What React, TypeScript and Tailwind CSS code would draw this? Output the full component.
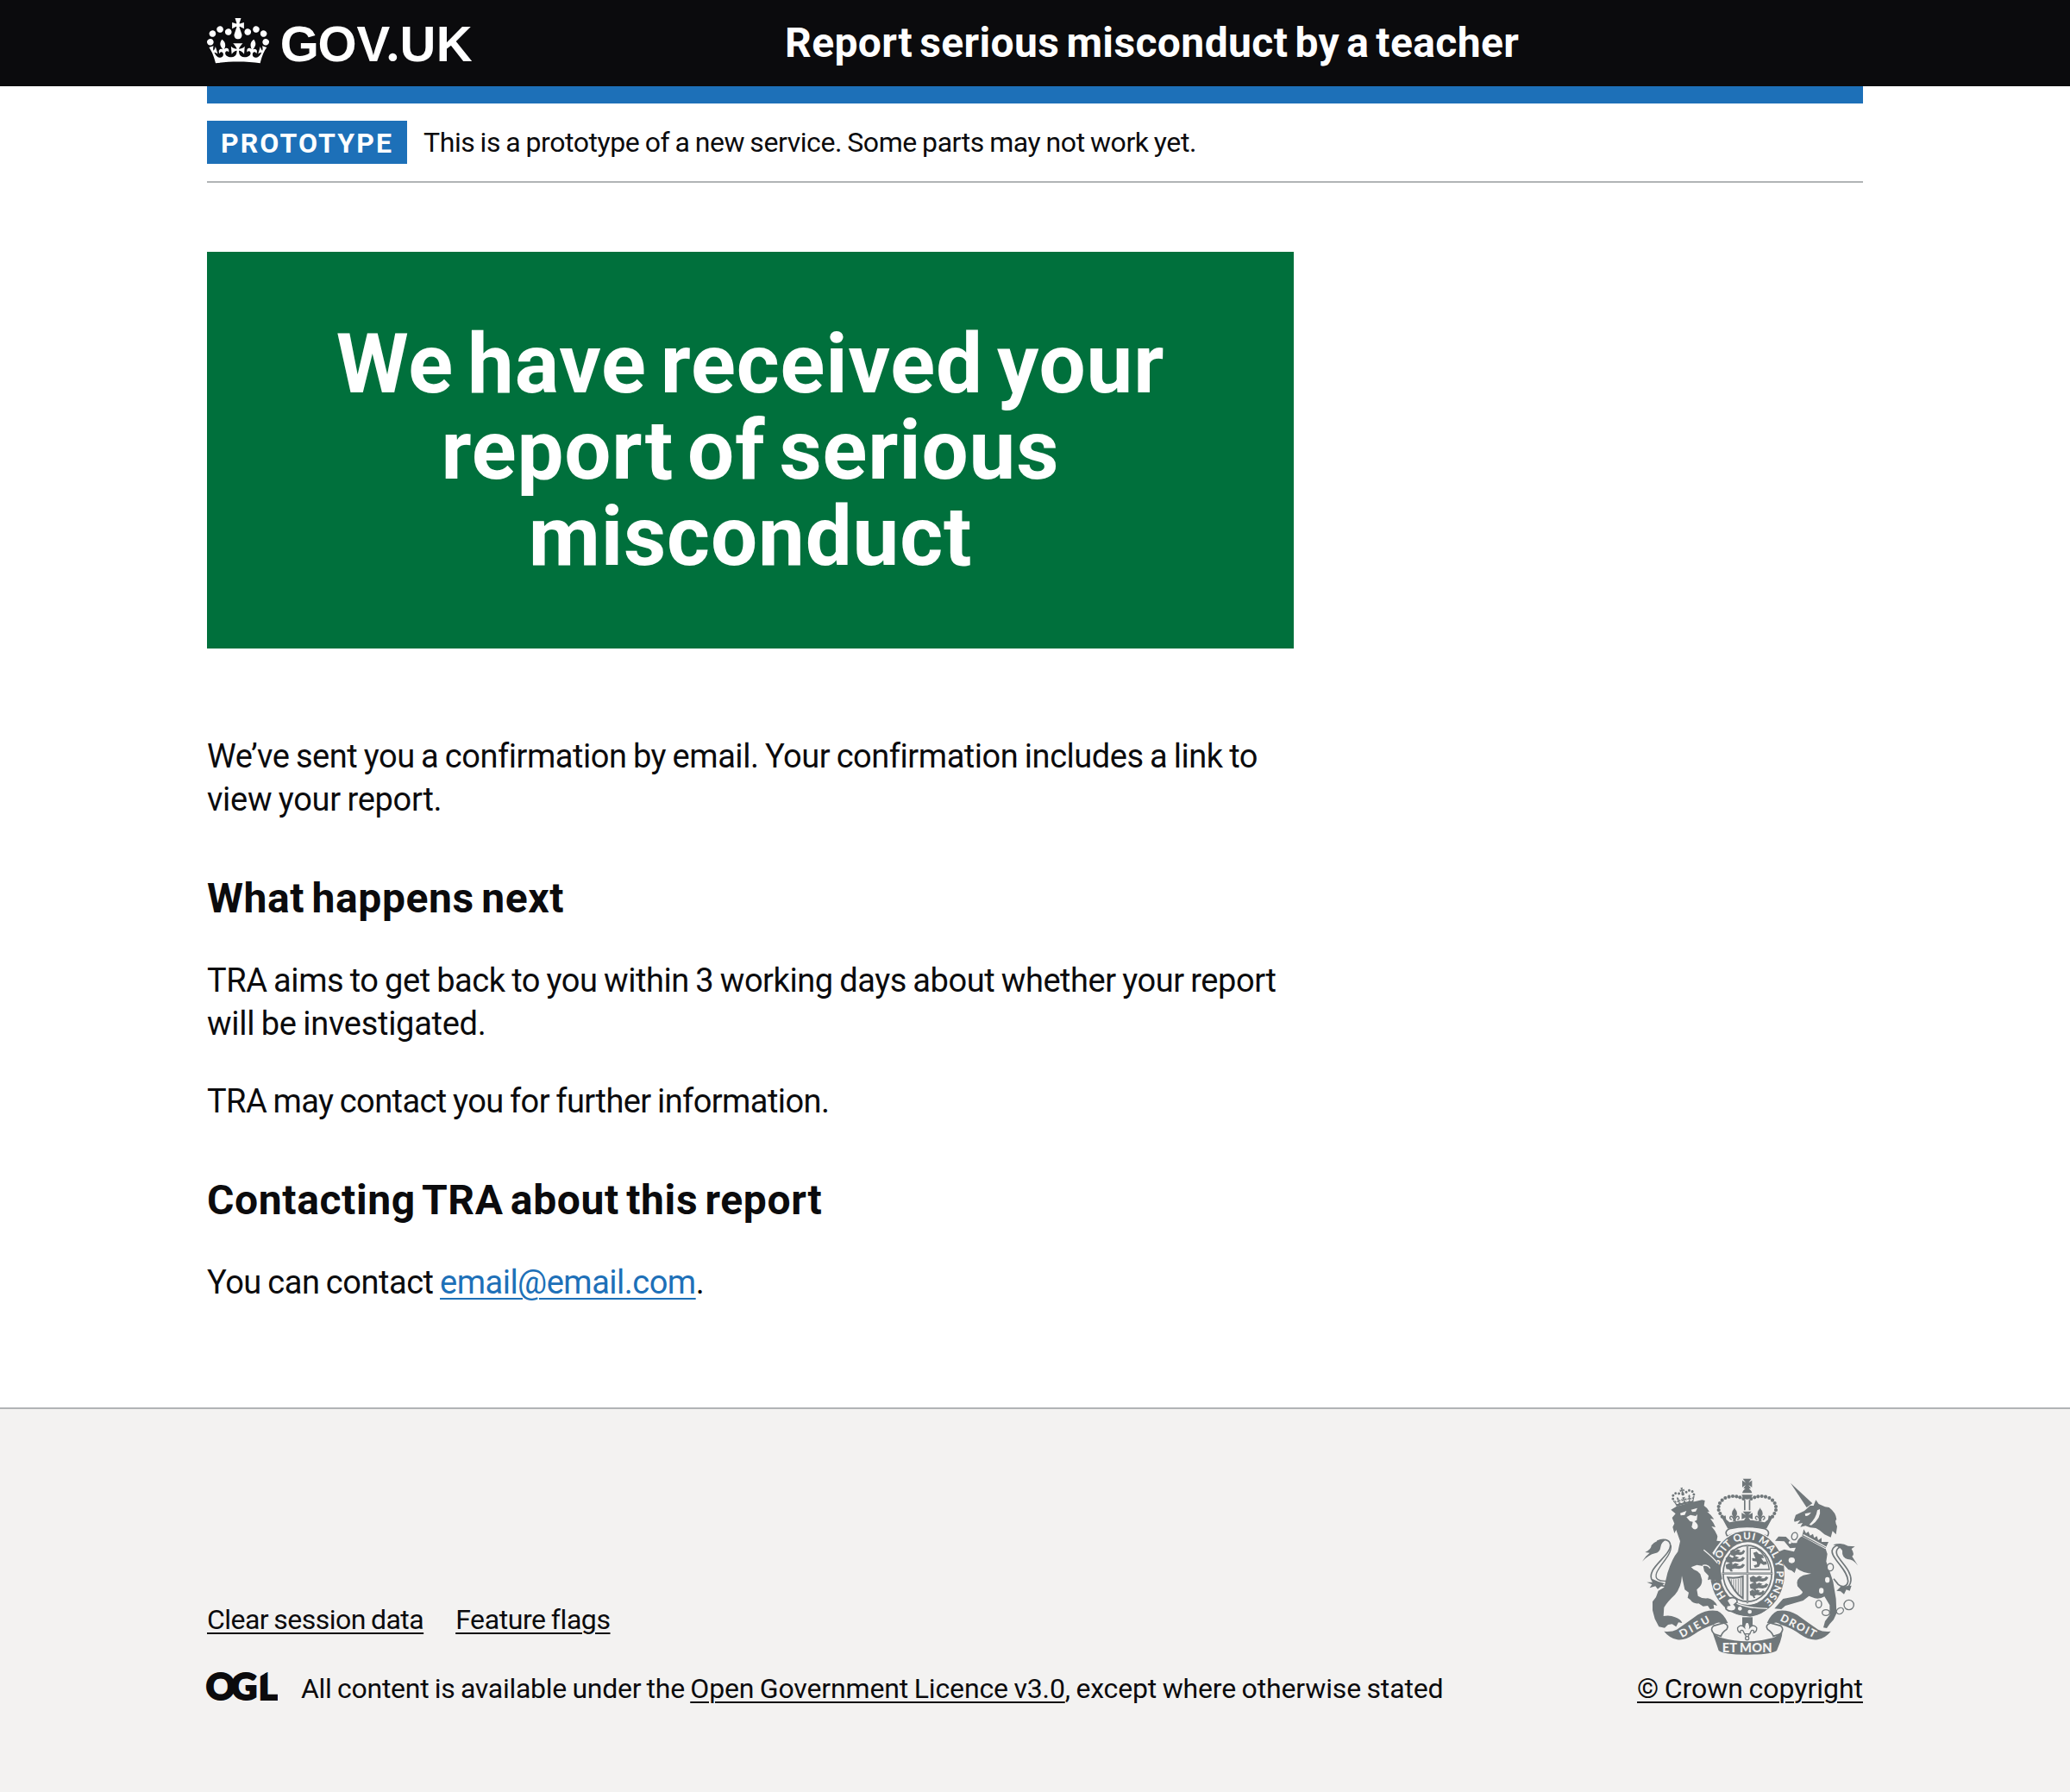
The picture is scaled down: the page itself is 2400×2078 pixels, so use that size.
const CROWN =
  "M25 30.2c3.5 1.5 7.7-.2 9.1-3.7 1.5-3.6-.2-7.8-3.9-9.2-3.6-1.4-7.6.3-9.1 3.9-1.4 3.5.3 7.5 3.9 9zM9 39.5c3.6 1.5 7.8-.2 9.2-3.7 1.5-3.6-.2-7.8-3.9-9.1-3.6-1.5-7.6.2-9.1 3.8-1.4 3.5.3 7.5 3.8 9zM4.4 57.2c3.5 1.5 7.7-.2 9.1-3.8 1.5-3.6-.2-7.7-3.9-9.1-3.5-1.5-7.6.3-9.1 3.8-1.4 3.5.3 7.6 3.9 9.1zm38.3-21.4c3.5 1.5 7.7-.2 9.1-3.8 1.5-3.6-.2-7.7-3.9-9.1-3.6-1.5-7.6.3-9.1 3.8-1.3 3.6.4 7.7 3.9 9.1zm64.4-5.6c-3.6 1.5-7.8-.2-9.1-3.7-1.5-3.6.2-7.8 3.8-9.2 3.6-1.4 7.7.3 9.2 3.9 1.3 3.5-.4 7.5-3.9 9zm15.9 9.3c-3.6 1.5-7.7-.2-9.1-3.7-1.5-3.6.2-7.8 3.7-9.1 3.6-1.5 7.7.2 9.2 3.8 1.5 3.5-.3 7.5-3.8 9zm4.7 17.7c-3.6 1.5-7.8-.2-9.2-3.8-1.5-3.6.2-7.7 3.9-9.1 3.6-1.5 7.7.3 9.2 3.8 1.3 3.5-.4 7.6-3.9 9.1zM89.3 35.8c-3.6 1.5-7.8-.2-9.2-3.8-1.4-3.6.2-7.7 3.9-9.1 3.6-1.5 7.7.3 9.2 3.8 1.4 3.6-.3 7.7-3.9 9.1zM69.7 17.7l8.9 4.7V9.3l-8.9 2.8c-.2-.3-.5-.6-.9-.9L72.4 0H59.6l3.5 11.2c-.3.3-.6.5-.9.9l-8.8-2.8v13.1l8.8-4.7c.3.3.6.7.9.9l-5 15.4v.1c-.2.8-.4 1.6-.4 2.4 0 4.1 3.1 7.5 7 8.1h.2c.3 0 .7.1 1 .1.4 0 .7 0 1-.1h.2c4-.6 7.1-4.1 7.1-8.1 0-.8-.1-1.7-.4-2.4V34l-5.1-15.4c.4-.2.7-.6 1-.9zM66 92.8c16.9 0 32.8 1.1 47.1 3.2 4-16.9 8.9-26.7 14-33.5l-9.6-3.4c1 4.9 1.1 7.2 0 10.2-1.5-1.4-3-4.3-4.2-8.7L108.6 76c2.8-2 5-3.2 7.5-3.3-4.4 9.4-10 11.9-13.6 11.2-4.3-.8-6.3-4.6-5.6-7.9 1-4.7 5.7-5.9 8-.5 4.3-8.7-3-11.4-7.6-8.8 7.1-7.2 7.9-13.5 2.1-21.1-8 6.1-8.1 12.3-4.5 20.8-4.7-5.4-12.1-2.5-9.5 6.2 3.4-5.2 7.9-2 7.2 3.1-.6 4.3-6.4 7.8-13.5 7.2-10.3-.9-10.9-8-11.2-13.8 2.5-.5 7.1 1.8 11 7.3L80.2 60c-4.1 4.4-8 5.3-12.3 5.4 1.4-4.4 8-11.6 8-11.6H55.5s6.4 7.2 7.9 11.6c-4.2-.1-8-1-12.3-5.4l1.4 16.4c3.9-5.5 8.5-7.7 10.9-7.3-.3 5.8-.9 12.8-11.1 13.8-7.2.6-12.9-2.9-13.5-7.2-.7-5 3.8-8.3 7.1-3.1 2.7-8.7-4.6-11.6-9.4-6.2 3.7-8.5 3.6-14.7-4.6-20.8-5.8 7.6-5 13.9 2.2 21.1-4.7-2.6-11.9.1-7.7 8.8 2.3-5.5 7.1-4.2 8.1.5.7 3.3-1.3 7.1-5.7 7.9-3.5.7-9-1.8-13.5-11.2 2.5.1 4.7 1.3 7.5 3.3l-4.7-15.4c-1.2 4.4-2.7 7.2-4.3 8.7-1.1-3-.9-5.3 0-10.2l-9.5 3.4c5 6.9 9.9 16.7 14 33.5 14.8-2.1 30.8-3.2 47.7-3.2z";

const INK = "#70777a";
const PAPER = "#f3f2f1";

function Logotype() {
  return (
    <a href="#" aria-label="GOV.UK" className="block w-[670px] shrink-0">
      <svg viewBox="0 0 320 60" className="block h-[60px] w-[320px] overflow-visible" fill="white">
        <g transform="translate(0 1) scale(0.5455)">
          <path fillRule="evenodd" d={CROWN} />
        </g>
        <text
          x="84.8 128.4 173.6 208.4 223.600 265.800"
          y="51"
          className="font-['Liberation_Sans',sans-serif] text-[58px] font-bold"
        >
          GOV
          <tspan className="font-['Lato',sans-serif] font-black">.</tspan>
          UK
        </text>
      </svg>
    </a>
  );
}

function OglLogo() {
  return (
    <svg viewBox="0 0 82 34" className="mt-px block h-[34px] w-[82px] shrink-0 overflow-visible" fill="#0b0b0d" role="img" aria-label="OGL">
      <defs>
        <clipPath id="ogl-cut">
          <path d="M-2 -3H60V6L71.500 -1V22H82V33.200H62.500L60.500 33.200L57 30V36H-2Z" />
        </clipPath>
      </defs>
      <g clipPath="url(#ogl-cut)">
        <text
          x="-1.200 27.800 59.800"
          y="32.200"
          stroke="#0b0b0d"
          strokeWidth="2.200"
          className="font-['Lato',sans-serif] text-[42px] font-black"
        >
          OGL
        </text>
      </g>
    </svg>
  );
}

/* Beads along one arch of the central crown, mirrored for the other. */
const BEADS = [
  [424, 142], [412, 137], [400, 134], [387, 133], [374, 135], [361, 139], [350, 147], [342, 157], [338, 169], [338, 181], [343, 193], [350, 204],
];

const RAMPANT = "M0 8l10-6 8 5 8-5 10 4-6 4 10 0 6-6 6 4-6 8-10 3-12-1-8 3 4 5-6 1-4-6-8-2z";

function Lion() {
  return (
    <g>
      <g transform="translate(168 112) rotate(-12) scale(.63)" fill={INK}>
        <path fillRule="evenodd" d={CROWN} />
      </g>
      <path d="M172 180L192 168L240 155L280 146L290 148L287 166Q300 174 306 188L298 187Q312 198 322 213L309 211Q320 224 327 241L313 238Q328 254 334 273L331 288L346 290L330 310L316 330Q330 350 342 378L350 420L336 436L326 425L318 433L310 422L300 425L303 410L288 394L284 376L262 372L242 380Q250 390 264 394L274 404L280 424Q280 440 272 448L262 458L266 480Q280 490 300 488Q322 492 333 514L320 510L322 524L308 526L300 514L284 516L268 506Q248 508 240 494L230 486L234 468L220 458L214 430L210 410Q208 450 186 476Q160 500 148 520L146 550Q170 546 186 554Q206 560 211 574L198 572L190 587L176 578L162 580L150 591L130 587L116 560L108 530L108 500L120 484L128 462L148 450L160 400Q176 350 196 326L204 290L190 250L184 262L178 240L184 228L176 208L188 194Z" fill={INK} />
      <path d="M150 446C112 440 92 424 108 392C124 362 172 330 170 302C168 284 146 278 124 290" fill="none" stroke={INK} strokeWidth="5" />
      <path d="M156 428C132 430 114 422 122 400C134 370 176 336 172 304" fill="none" stroke={INK} strokeWidth="4" />
      <path d="M72 360Q82 342 98 330L82 328Q104 318 104 304Q122 282 158 284Q138 292 136 310Q134 328 116 332Q96 336 72 360Z" fill={INK} />
      <path d="M88 432L106 440L98 452L118 446L126 456L150 436L128 430L106 420L108 432Z" fill={INK} />
      <g fill={PAPER}>
        <path d="M204 192L226 184L220 198L206 200ZM242 180L264 174L258 186L246 188Z" />
        <path d="M226 206L240 198L258 202L264 196L262 216L254 220Q270 232 264 244Q254 254 244 240L248 222L238 220Z" />
      </g>
      <g fill="none" stroke={PAPER} strokeWidth="4">
        <path d="M286 320Q318 346 334 366M282 374Q300 370 308 384" />
      </g>
    </g>
  );
}

function Unicorn() {
  return (
    <g>
      <path d="M588 87L664 158L644 172Z" fill={INK} />
      <path d="M600 216L606 198L636 184L656 166L668 166L676 146L686 160L708 170L722 172Q746 190 748 214Q740 216 750 238L746 266L734 254L728 276L706 266L690 252L676 244L656 242L640 236L622 240L630 226L612 230L622 216L602 222Z" fill={INK} />
      <path d="M638 194l22-5-8 9q-8 5-12 4zM690 178q6 32-30 56l-7-2q24-22 28-50z" fill={PAPER} />
      <path d="M628 272L650 282L710 316L716 334L712 360L724 394L736 430L746 490L748 540L738 562L724 578L714 592L702 590L708 568L724 546L724 512L706 482Q690 492 672 488L652 480L632 496L570 514L556 526L532 524L546 508L562 490L612 480Q630 474 630 466L612 446Q604 420 632 408L660 402Q632 400 612 386L596 364L604 346L610 378L602 400L592 392L580 388L564 370L554 348L548 326L566 318L600 326L606 312L586 314L566 290L534 288L546 273L572 274L594 296L610 296Q612 282 628 272Z" fill={INK} />
      <path d="M634 248L728 296L708 316L626 272Z" fill={PAPER} />
      <path d="M634 248l8 14 8-6 6 14 10-6 4 14 10-6 4 14 12-8 0 14 24 0-10 22L628 272z" fill={INK} />
      <path d="M632 267L712 310" stroke={PAPER} strokeWidth="4" />
      <path d="M774 304C746 298 724 314 736 338C750 366 786 394 788 428C786 448 768 452 754 440L738 420" fill="none" stroke={INK} strokeWidth="5" />
      <path d="M776 306C756 308 742 318 750 338C764 364 800 392 798 426C796 446 786 452 776 456" fill="none" stroke={INK} strokeWidth="5" />
      <path d="M736 302Q766 292 788 306L812 308L800 316Q812 336 802 342L822 374Q806 352 786 352Q766 346 768 322Q758 308 736 302Z" fill={INK} />
      <path d="M800 444L794 462L782 458L774 474L762 464L748 462L762 448L782 446Z" fill={INK} />
      <g fill={PAPER} stroke={INK} strokeWidth="4">
        <ellipse cx="602" cy="272" rx="10" ry="13" transform="rotate(15 602 272)" />
        <ellipse cx="592" cy="356" rx="13" ry="12" />
        <ellipse cx="726" cy="380" rx="11" ry="13" />
        <ellipse cx="686" cy="508" rx="10" ry="13" />
        <ellipse cx="711" cy="538" rx="13" ry="10" />
        <ellipse cx="760" cy="532" rx="13" ry="10" transform="rotate(-35 760 532)" />
        <circle cx="791" cy="511" r="17" />
      </g>
      <g fill={PAPER}>
        <ellipse cx="716" cy="424" rx="8" ry="10" />
        <ellipse cx="695" cy="462" rx="8" ry="10" />
        <circle cx="586" cy="294" r="5" />
      </g>
    </g>
  );
}

function CrownAndShield() {
  return (
    <g>
      {/* orb and cross */}
      <path d="M422 72h30l-10 14 12-8v24l-12-8 8 12h-26l8-12-12 8V78l12 8zM420 122q4-14 17-18q13 4 17 18zM418 128h38q-4 16-19 16t-19-16zM426 146h5v36h-5zM443 146h5v36h-5z" fill={INK} />
      <g fill={INK}>
        {BEADS.map(([x, y]) => (
          <g key={`${x}-${y}`}>
            <circle cx={x} cy={y} r="6.200" />
            <circle cx={875 - x} cy={y} r="6.200" />
          </g>
        ))}
      </g>
      {/* cross and fleurs-de-lis on the rim */}
      <path d="M422 186h30l-10 12 14-7v22l-14-6 8 14h-26l8-14-14 6V191l14 7z" fill={INK} />
      <g fill={INK} stroke={INK} strokeWidth="4" strokeLinecap="round">
        <path d="M393 175Q404 187 401 197L395 210L398 220H388L391 210L385 197Q382 187 393 175ZM482 175Q493 187 490 197L484 210L487 220H477L480 210L474 197Q471 187 482 175Z" strokeWidth="1" />
        <path fill="none" d="M391 214Q384 198 378 205Q375 213 382 214M395 214Q402 198 408 205Q411 213 404 214M480 214Q473 198 467 205Q464 213 471 214M484 214Q491 198 497 205Q500 213 493 214" />
      </g>
      <path d="M348 206L362 200L364 214L376 224Q437 208 498 224L510 214L512 200L526 206L504 246Q437 232 370 246Z" fill={INK} />
      <path d="M376 246Q437 232 498 246Q518 254 508 272Q437 244 368 272Q356 254 376 246Z" fill={PAPER} stroke={INK} strokeWidth="5" />

      {/* garter */}
      <ellipse cx="438" cy="402" rx="134" ry="152" fill={PAPER} />
      <ellipse cx="438" cy="402" rx="129" ry="148" fill={INK} />
      <ellipse cx="438" cy="402" rx="94" ry="109" fill={PAPER} />
      <path id="garter-motto" d="M364 482A101 118 0 1 1 490 503" fill="none" />
      <text fill={PAPER} className="font-['Lato',sans-serif] text-[35px] font-black">
        <textPath href="#garter-motto" textLength="540" lengthAdjust="spacing">
          HONI SOIT QUI MAL Y PENSE
        </textPath>
      </text>

      {/* quartered arms */}
      <ellipse cx="438" cy="402" rx="87" ry="100" fill={INK} />
      <ellipse cx="438" cy="402" rx="82" ry="95" fill={PAPER} />
      <path d="M438 302V506M350 402H526" stroke={INK} strokeWidth="7" />
      <path d="M438 302V506M350 402H526" stroke={PAPER} strokeWidth="1.500" />
      <g fill={INK}>
        {[326, 350, 374].map((y) => (
          <path key={y} transform={`translate(${y === 326 ? 378 : 362} ${y - 11}) scale(${y === 326 ? 1 : 1.3} 1.200)`} d={RAMPANT} />
        ))}
        {[418, 442, 466].map((y) => (
          <path key={y} transform={`translate(446 ${y - 11}) scale(${y === 466 ? 1 : 1.25} 1.200)`} d={RAMPANT} />
        ))}
      </g>
      <path d="M448 314L470 314Q508 338 514 388H448Z" fill="none" stroke={INK} strokeWidth="4" />
      <path d="M458 330l12-4 8 8 12 2 6 12-10 0 8 12 10 0 2 10-12 2-10-6-6 12-14 4-4-8 12-4-2-10-14-2-2-10 12 2z" fill={INK} />
      <path d="M370 416Q398 420 422 412V488Q392 470 370 416Z" fill="none" stroke={INK} strokeWidth="6" />
      <path d="M382 422V444M390 422V456M398 422V466M406 420V474M414 418V480" stroke={INK} strokeWidth="2.500" />

      {/* buckle and strap */}
      <path d="M360 488Q440 528 508 524Q488 546 448 552Q398 548 360 524Z" fill={INK} />
      <path d="M396 504Q440 524 508 524" fill="none" stroke={PAPER} strokeWidth="4" />
      <path d="M366 496Q374 484 388 486Q404 488 402 502L392 510Q404 520 394 530Q378 538 364 526L366 514L376 512Z" fill={PAPER} stroke={INK} strokeWidth="5" />
      <circle cx="412" cy="524" r="7" fill={PAPER} />
      <circle cx="446" cy="535" r="7" fill={PAPER} />
    </g>
  );
}

function Ribbon() {
  return (
    <g>
      <path d="M420 554h36v40h-36z" fill={INK} />
      <g fill={PAPER} stroke={INK} strokeWidth="4">
        <path d="M437 568Q448 578 446 590Q458 576 470 590Q472 604 460 608Q462 596 452 600L446 612H428L422 600Q412 596 414 608Q402 604 404 590Q416 576 428 590Q426 578 437 568Z" />
        <path d="M426 612h22M430 614l7 16 7-16" />
        <circle cx="437" cy="627" r="6" />
      </g>
      <path d="M322 612Q306 596 320 584L356 574Q376 582 366 596Q350 606 346 620Z" fill={PAPER} stroke={INK} strokeWidth="5" />
      <path d="M552 612Q568 596 554 584L518 574Q498 582 508 596Q524 606 528 620Z" fill={PAPER} stroke={INK} strokeWidth="5" />
      <path d="M148 603Q174 606 192 597Q234 568 264 546Q298 526 334 532Q356 542 370 574L352 578Q338 566 320 580Q282 592 252 614Q220 636 194 632Q166 626 148 603Z" fill={INK} />
      <path d="M728 603Q702 606 684 597Q642 568 612 546Q578 526 542 532Q520 542 506 574L524 578Q538 566 554 580Q594 592 622 614Q654 636 682 632Q710 626 728 603Z" fill={INK} />
      <path d="M316 600Q322 616 348 626Q437 650 526 626Q550 616 560 598Q560 616 552 640L540 670Q522 684 437 684Q352 684 338 670L328 640Q320 620 316 600Z" fill={INK} />
      <g fill={PAPER} className="font-['Lato',sans-serif] font-black">
        <text x="210" y="626" transform="rotate(-29 210 626)" textLength="114" className="text-[37px]">
          DIEU
        </text>
        <text x="350" y="675" textLength="174" className="text-[44px]">
          ET MON
        </text>
        <text x="550" y="565" transform="rotate(27 550 565)" textLength="134" className="text-[37px]">
          DROIT
        </text>
      </g>
    </g>
  );
}

function RoyalArms() {
  return (
    <svg viewBox="72 70 750 615" className="block h-[205px] w-[250px] overflow-visible" role="img" aria-label="Royal coat of arms">
      <CrownAndShield />
      <Lion />
      <Unicorn />
      <Ribbon />
    </svg>
  );
}

const footerLink = "underline decoration-2 underline-offset-[4px]";

export default function App() {
  return (
    <div className="flex min-h-[2078px] flex-col bg-white font-['Roboto',sans-serif] text-[38px] leading-[50px] text-[#0b0b0d]">
      <header className="h-[100px] bg-[#0b0b0d] text-white">
        <div className="mx-auto flex w-[1920px] pt-5">
          <Logotype />
          <a href="#" className="whitespace-nowrap text-[48px] leading-[60px] font-bold tracking-[0.380px] [word-spacing:-4.200px]">
            Report serious misconduct by a teacher
          </a>
        </div>
      </header>

      <div className="mx-auto w-[1920px] grow">
        <div className="h-5 bg-[#1d70b8]" />
        <div className="flex items-center border-b-2 border-[#b1b4b6] py-5">
          <strong className="mr-5 h-[50px] w-[232px] bg-[#1d70b8] pl-4 text-[32px] leading-[52px] font-bold tracking-[2.100px] text-white">
            PROTOTYPE
          </strong>
          <span className="-ml-px text-[32px] leading-[50px] tracking-[-0.420px] [word-spacing:-1.280px]">
            This is a prototype of a new service. Some parts may not work yet.
          </span>
        </div>

        <main className="w-[1260px] pt-20">
          <div className="mb-[100px] bg-[#00703c] p-20 text-center text-white">
            <h1 className="text-[96px] leading-[100px] font-bold tracking-[0.850px] [word-spacing:-8.600px]">
              We have received your
              <br />
              report of serious
              <br />
              misconduct
            </h1>
          </div>
          <p className="mb-[60px] whitespace-nowrap [word-spacing:-1.500px]">
            <span className="tracking-[-0.460px]">We’ve sent you a confirmation by email. Your confirmation includes a link to</span>
            <br />
            <span className="tracking-[-0.300px]">view your report.</span>
          </p>
          <h2 className="mb-10 text-[48px] leading-[60px] font-bold tracking-[0.600px] [word-spacing:-4.200px]">What happens next</h2>
          <p className="mb-10 whitespace-nowrap [word-spacing:-1.500px]">
            <span className="tracking-[-0.430px]">TRA aims to get back to you within 3 working days about whether your report</span>
            <br />
            <span className="tracking-[-0.290px]">will be investigated.</span>
          </p>
          <p className="mb-[60px] tracking-[-0.580px] [word-spacing:-1.500px]">TRA may contact you for further information.</p>
          <h2 className="mb-10 text-[48px] leading-[60px] font-bold tracking-[0.620px] [word-spacing:-4.200px]">
            Contacting TRA about this report
          </h2>
          <p className="tracking-[-0.470px] [word-spacing:-1.500px]">
            You can contact{" "}
            <a href="#" className="tracking-[-0.510px] text-[#1d70b8] underline decoration-2 underline-offset-[5px]">
              email@email.com
            </a>
            .
          </p>
        </main>
      </div>

      <footer className="h-[446px] border-t-2 border-[#b1b4b6] bg-[#f3f2f1] pt-20 text-[32px] leading-[40px]">
        <div className="mx-auto flex w-[1920px] items-end justify-between whitespace-nowrap [word-spacing:-1.280px]">
          <div>
            <ul className="mb-10 flex gap-[37px]">
              <li className="tracking-[-0.530px]">
                <a href="#" className={footerLink}>Clear session data</a>
              </li>
              <li className="tracking-[-0.420px]">
                <a href="#" className={footerLink}>Feature flags</a>
              </li>
            </ul>
            <div className="flex items-start gap-[27px]">
              <OglLogo />
              <span className="tracking-[-0.270px]">
                All content is available under the{" "}
                <a href="#" className={`${footerLink} tracking-[-0.140px]`}>Open Government Licence v3.0</a>
                <span className="tracking-[-0.150px]">, except where otherwise stated</span>
              </span>
            </div>
          </div>
          <div className="flex w-[262px] flex-col items-center">
            <RoyalArms />
            <a href="#" className={`${footerLink} mt-[19px] tracking-[-0.030px]`}>
              © Crown copyright
            </a>
          </div>
        </div>
      </footer>
    </div>
  );
}
